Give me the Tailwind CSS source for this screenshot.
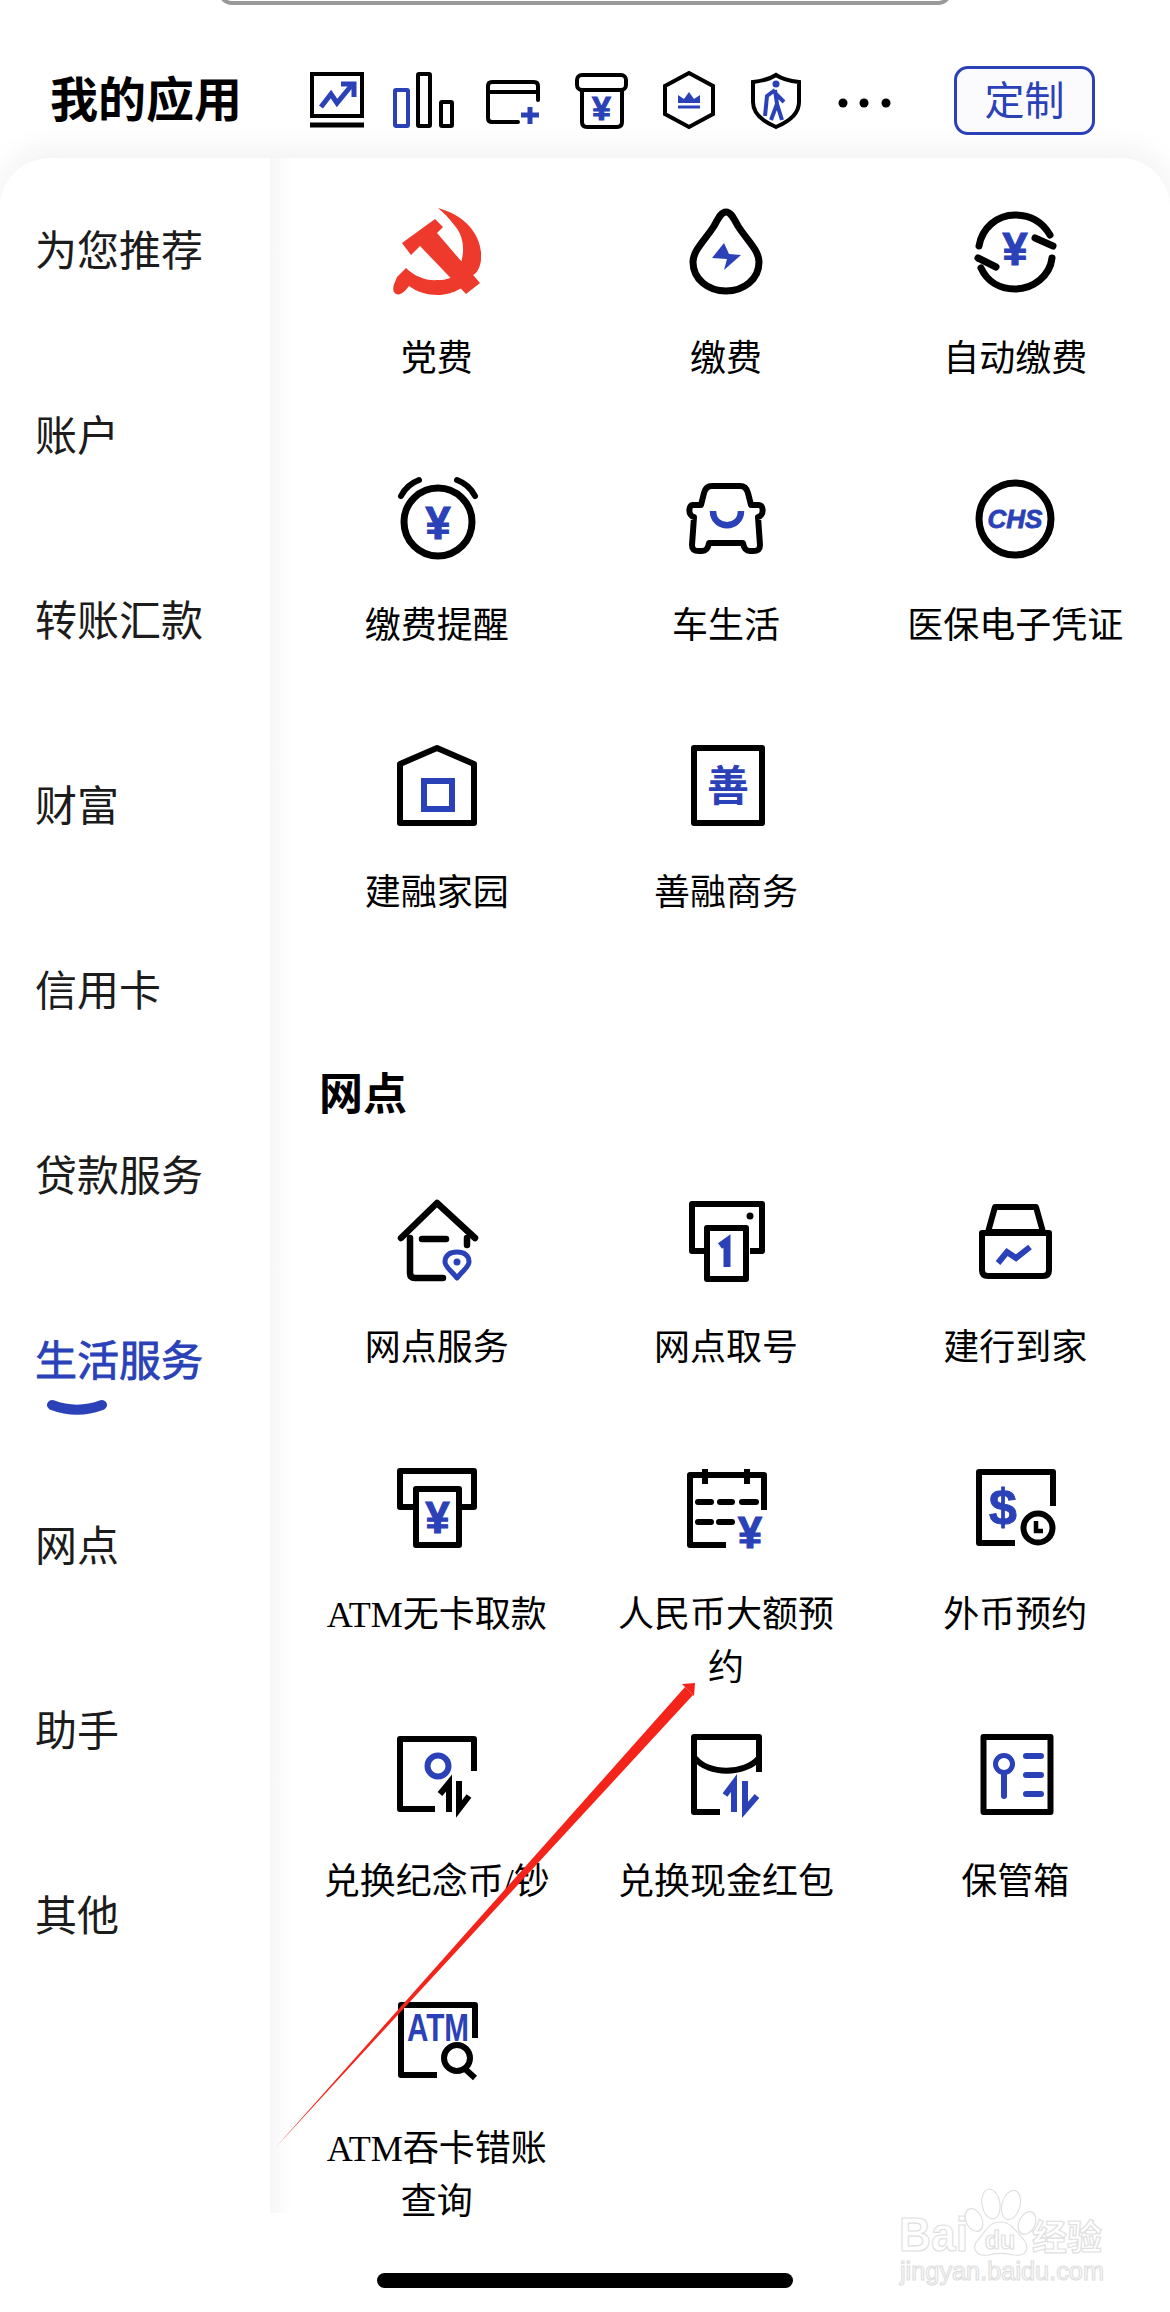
<!DOCTYPE html>
<html lang="zh-CN">
<head>
  <meta charset="UTF-8" />
  <meta name="viewport" content="width=device-width, initial-scale=1" />
  <title>我的应用</title>
  <script src="https://cdn.jsdelivr.net/npm/@tailwindcss/browser@4"></script>
</head>
<body class="bg-white">
<div class="relative w-[1170px] h-[2312px] overflow-hidden bg-white text-black font-['Liberation_Serif','Noto_Sans_CJK_SC',serif]">

  <!-- bottom edge of the search box -->
  <div class="mx-auto -mt-[9px] w-[734px] h-[14px] border-x-[4px] border-b-[4px] border-[#999] rounded-b-[16px]"></div>

  <!-- header -->
  <header class="flex items-center h-[153px] pt-[37px] pl-[50px]">
    <h1 class="w-[194px] pb-[9px] text-[48px] leading-[60px] font-bold font-['Noto_Sans_CJK_SC',sans-serif]">我的应用</h1>
    <div class="flex ml-[48px]">
      <div class="w-[88px] flex justify-center">
        <svg width="60" height="60" viewBox="0 0 60 60" fill="none" class="overflow-visible">
          <rect x="6" y="4" width="50" height="42" stroke="#000" stroke-width="4"/>
          <path d="M4 55H58" stroke="#000" stroke-width="5"/>
          <path d="M15 37L25 24L31 33L45 16" stroke="#2a41b8" stroke-width="5"/>
          <path d="M35 14H48V27" stroke="#2a41b8" stroke-width="5"/>
        </svg>
      </div>
      <div class="w-[88px] flex justify-center">
        <svg width="60" height="60" viewBox="0 0 60 60" fill="none" class="overflow-visible">
          <rect x="1" y="20" width="13" height="36" rx="1" stroke="#2a41b8" stroke-width="4"/>
          <rect x="24" y="4" width="12" height="52" rx="1" stroke="#000" stroke-width="4"/>
          <rect x="47" y="32" width="11" height="24" rx="1" stroke="#000" stroke-width="4"/>
        </svg>
      </div>
      <div class="w-[88px] flex justify-center">
        <svg width="60" height="60" viewBox="0 0 60 60" fill="none" class="overflow-visible">
          <path d="M36 52H10Q6 52 6 48V16Q6 12 10 12H52Q56 12 56 16V30" stroke="#000" stroke-width="4" stroke-linecap="round"/>
          <path d="M6 22H56" stroke="#000" stroke-width="4"/>
          <path d="M48 37V54M39 45H57" stroke="#2a41b8" stroke-width="5"/>
        </svg>
      </div>
      <div class="w-[88px] flex justify-center">
        <svg width="60" height="60" viewBox="0 0 60 60" fill="none" class="overflow-visible">
          <rect x="7" y="5" width="49" height="15" rx="5" stroke="#000" stroke-width="4"/>
          <path d="M12 20V52Q12 57 17 57H47Q52 57 52 52V20" stroke="#000" stroke-width="4"/>
          <text x="31.500" y="50" text-anchor="middle" font-family="Liberation Sans" font-weight="700" font-size="34" stroke="#2a41b8" stroke-width="1" fill="#2a41b8">¥</text>
        </svg>
      </div>
      <div class="w-[88px] flex justify-center">
        <svg width="60" height="60" viewBox="0 0 60 60" fill="none" class="overflow-visible">
          <path d="M31 3L55 16V44L31 57L7 44V16Z" stroke="#000" stroke-width="4"/>
          <path d="M20 25L26 29L31 22L36 29L42 25V33H20Z" fill="#2a41b8"/>
          <path d="M20 37H42" stroke="#2a41b8" stroke-width="3"/>
        </svg>
      </div>
      <div class="w-[88px] flex justify-center">
        <svg width="60" height="60" viewBox="0 0 60 60" fill="none" class="overflow-visible">
          <path d="M30 5C36 9 44 11 53 12V32C53 44 42 52 30 57C18 52 7 44 7 32V12C16 11 24 9 30 5Z" stroke="#000" stroke-width="4"/>
          <circle cx="30" cy="14" r="3.500" fill="#2a41b8"/>
          <path d="M29 20L21 26L19 46M29 20L31 34L25 50M31 34L36 50M30 24L38 32" stroke="#2a41b8" stroke-width="4"/>
        </svg>
      </div>
      <div class="w-[88px] flex justify-center">
        <svg width="60" height="60" viewBox="0 0 60 60" fill="#000">
          <circle cx="9" cy="33" r="4.500"/><circle cx="30" cy="33" r="4.500"/><circle cx="52" cy="33" r="4.500"/>
        </svg>
      </div>
    </div>
    <button class="ml-[46px] w-[141px] h-[69px] rounded-[14px] border-[3px] border-[#2a41b8] bg-[#fbfbfd] text-[#2a41b8] text-[40px] leading-[56px] pb-[4px] font-['Noto_Sans_CJK_SC',sans-serif] font-normal">定制</button>
  </header>

  <!-- card -->
  <div class="relative flex h-[2154px] bg-white rounded-t-[50px] shadow-[0_-10px_30px_rgba(30,30,70,0.06)]">

    <nav class="w-[270px] shrink-0 text-[42px] text-[#1c1c1c] font-['Noto_Sans_CJK_SC',sans-serif]">
      <div class="h-[185px] flex items-center pl-[35px] pb-[7px]">为您推荐</div>
      <div class="h-[185px] flex items-center pl-[35px] pb-[7px]">账户</div>
      <div class="h-[185px] flex items-center pl-[35px] pb-[7px]">转账汇款</div>
      <div class="h-[185px] flex items-center pl-[35px] pb-[7px]">财富</div>
      <div class="h-[185px] flex items-center pl-[35px] pb-[7px]">信用卡</div>
      <div class="h-[185px] flex items-center pl-[35px] pb-[7px]">贷款服务</div>
      <div class="relative h-[185px] flex items-center pl-[35px] pb-[7px] text-[#2a41b8] [-webkit-text-stroke:0.8px_#2a41b8]">
        生活服务
        <svg class="absolute left-[46px] top-[131px]" width="64" height="20" viewBox="0 0 64 20" fill="none">
          <path d="M6 6C22 12 40 12 56 6" stroke="#2a41b8" stroke-width="10" stroke-linecap="round"/>
        </svg>
      </div>
      <div class="h-[185px] flex items-center pl-[35px] pb-[7px]">网点</div>
      <div class="h-[185px] flex items-center pl-[35px] pb-[7px]">助手</div>
      <div class="h-[185px] flex items-center pl-[35px] pb-[7px]">其他</div>
    </nav>

    <div class="w-[22px] h-[2055px] shrink-0 bg-gradient-to-r from-[#f7f7f9] to-white"></div>

    <main class="w-[868px] pt-[50px]">
      <div class="grid grid-cols-3 auto-rows-[267px] text-center text-[36px] leading-[53px]">

        <div class="flex flex-col items-center px-[25px]">
          <svg width="88" height="88" viewBox="0 0 88 88" fill="#ee3a2c">
            <path d="M45 0C75 8 90 30 88 52C87 60 84 66 78 68C76 78 60 87 45 87C34 87 24 84 16 78C13 82 8 88 3 86C-1 84 0 78 2 74L4 69L13 60C22 69 34 73 45 72C55 72 62 70 66 60C72 46 72 30 62 18C56 10 50 4 45 0Z"/>
            <path d="M42 11L50 19L44 25L87 75L73 86L27 38L18 47L9 35Z"/>
          </svg>
          <div class="mt-[37px]">党费</div>
        </div>
        <div class="flex flex-col items-center px-[25px]">
          <svg width="88" height="88" viewBox="0 0 88 88" fill="none">
            <path d="M44 4C49 4 52 11 56 18C64 31 77 42 77 54C77 71 62 83 44 83C26 83 11 71 11 54C11 42 24 31 32 18C36 11 39 4 44 4Z" stroke="#000" stroke-width="7"/>
            <path d="M42 35L30 50L45 51L42 62L59 47L47 46Z" fill="#2a41b8"/>
          </svg>
          <div class="mt-[37px]">缴费</div>
        </div>
        <div class="flex flex-col items-center px-[25px]">
          <svg width="88" height="88" viewBox="0 0 88 88" fill="none">
            <path d="M8 38C11 20 26 7 44 7C60 7 72 15 79 27" stroke="#000" stroke-width="7" stroke-linecap="round"/>
            <path d="M64 30L82 38" stroke="#000" stroke-width="7" stroke-linecap="round"/>
            <path d="M81 50C79 68 62 81 44 81C28 81 16 73 10 60" stroke="#000" stroke-width="7" stroke-linecap="round"/>
            <path d="M25 59L7 50" stroke="#000" stroke-width="7" stroke-linecap="round"/>
            <text x="44" y="57" text-anchor="middle" font-family="Liberation Sans" font-weight="700" font-size="46" textLength="25" lengthAdjust="spacingAndGlyphs" stroke="#2a41b8" stroke-width="1.200" fill="#2a41b8">¥</text>
          </svg>
          <div class="mt-[37px]">自动缴费</div>
        </div>

        <div class="flex flex-col items-center px-[25px]">
          <svg width="88" height="88" viewBox="0 0 88 88" fill="none">
            <circle cx="45" cy="47" r="34" stroke="#000" stroke-width="7"/>
            <path d="M8 21C12 13 18 8 26 5M82 21C78 13 72 8 64 5" stroke="#000" stroke-width="6" stroke-linecap="round"/>
            <text x="45" y="64" text-anchor="middle" font-family="Liberation Sans" font-weight="700" font-size="46" textLength="25" lengthAdjust="spacingAndGlyphs" stroke="#2a41b8" stroke-width="1.200" fill="#2a41b8">¥</text>
          </svg>
          <div class="mt-[37px]">缴费提醒</div>
        </div>
        <div class="flex flex-col items-center px-[25px]">
          <svg width="88" height="88" viewBox="0 0 88 88" fill="none">
            <path d="M30 11H58C63 11 65 14 66 18L69 30H77C82 30 82 41 76 42L78 70C78 75 75 76 71 76H68C64 76 62 74 61 68H27C26 74 24 76 20 76H17C13 76 10 75 10 70L12 42C6 41 6 30 11 30H19L22 18C23 14 25 11 30 11Z" stroke="#000" stroke-width="6" stroke-linejoin="round"/>
            <path d="M31 36C31 55 59 55 59 36" stroke="#2a41b8" stroke-width="6.500"/>
          </svg>
          <div class="mt-[37px]">车生活</div>
        </div>
        <div class="flex flex-col items-center px-[25px]">
          <svg width="88" height="88" viewBox="0 0 88 88" fill="none">
            <circle cx="44" cy="44" r="36" stroke="#000" stroke-width="7"/>
            <text x="44" y="53" text-anchor="middle" font-family="Liberation Sans" font-weight="700" font-style="italic" font-size="25" textLength="55" lengthAdjust="spacingAndGlyphs" stroke="#2a41b8" stroke-width="0.800" fill="#2a41b8">CHS</text>
          </svg>
          <div class="mt-[37px] whitespace-nowrap">医保电子凭证</div>
        </div>

        <div class="flex flex-col items-center px-[25px]">
          <svg width="88" height="88" viewBox="0 0 88 88" fill="none">
            <path d="M44 6L81 22V81H7V22Z" stroke="#000" stroke-width="6" stroke-linejoin="round"/>
            <rect x="31" y="39" width="28" height="28" stroke="#2a41b8" stroke-width="6"/>
          </svg>
          <div class="mt-[37px]">建融家园</div>
        </div>
        <div class="flex flex-col items-center px-[25px]">
          <svg width="88" height="88" viewBox="0 0 88 88" fill="none">
            <rect x="12" y="6" width="68" height="75" stroke="#000" stroke-width="6" stroke-linejoin="round"/>
            <text x="46" y="59" text-anchor="middle" font-family="Noto Sans CJK SC" font-weight="700" font-size="42" fill="#2a41b8">善</text>
          </svg>
          <div class="mt-[37px]">善融商务</div>
        </div>
      </div>

      <h2 class="mt-[54px] mb-[78px] pl-[27px] text-[44px] leading-[56px] font-bold font-['Noto_Sans_CJK_SC',sans-serif]">网点</h2>

      <div class="grid grid-cols-3 auto-rows-[267px] text-center text-[36px] leading-[53px]">
        <div class="flex flex-col items-center px-[25px]">
          <svg width="88" height="88" viewBox="0 0 88 88" fill="none">
            <path d="M8 41L44 6L82 41" stroke="#000" stroke-width="6.500" stroke-linejoin="round" stroke-linecap="round"/>
            <path d="M17 41V76Q17 81 22 81H50M74 41V48" stroke="#000" stroke-width="6.500" stroke-linecap="round"/>
            <path d="M29 42H53" stroke="#000" stroke-width="6.500" stroke-linecap="round"/>
            <path d="M64 81C58 73 52 70 52 65C52 58 57 55 64 55C71 55 76 58 76 65C76 70 70 73 64 81Z" fill="#fff" stroke="#2a41b8" stroke-width="5" stroke-linejoin="round"/>
            <circle cx="64" cy="65" r="3.500" fill="#2a41b8"/>
          </svg>
          <div class="mt-[37px]">网点服务</div>
        </div>
        <div class="flex flex-col items-center px-[25px]">
          <svg width="88" height="88" viewBox="0 0 88 88" fill="none">
            <path d="M22 54H10V7H80V54H68" stroke="#000" stroke-width="6" stroke-linejoin="round"/>
            <circle cx="68" cy="19" r="3.500" fill="#000"/>
            <rect x="25" y="31" width="39" height="51" stroke="#000" stroke-width="6" stroke-linejoin="round"/>
            <path d="M38 49L45 44V70" stroke="#2a41b8" stroke-width="7"/>
          </svg>
          <div class="mt-[37px]">网点取号</div>
        </div>
        <div class="flex flex-col items-center px-[25px]">
          <svg width="88" height="88" viewBox="0 0 88 88" fill="none">
            <path d="M24 10H65L72 35H17Z" stroke="#000" stroke-width="6" stroke-linejoin="round"/>
            <path d="M11 36H78V73Q78 79 72 79H17Q11 79 11 73Z" stroke="#000" stroke-width="6" stroke-linejoin="round"/>
            <path d="M27 66L36 55L45 61L59 50" stroke="#2a41b8" stroke-width="6"/>
          </svg>
          <div class="mt-[37px]">建行到家</div>
        </div>

        <div class="flex flex-col items-center px-[25px]">
          <svg width="88" height="88" viewBox="0 0 88 88" fill="none">
            <path d="M20 43H7V7H81V43H68" stroke="#000" stroke-width="6" stroke-linejoin="round"/>
            <rect x="23" y="25" width="43" height="56" stroke="#000" stroke-width="6" stroke-linejoin="round"/>
            <text x="44.500" y="69" text-anchor="middle" font-family="Liberation Sans" font-weight="700" font-size="44" textLength="24" lengthAdjust="spacingAndGlyphs" stroke="#2a41b8" stroke-width="1.200" fill="#2a41b8">¥</text>
          </svg>
          <div class="mt-[37px]">ATM无卡取款</div>
        </div>
        <div class="flex flex-col items-center px-[25px]">
          <svg width="88" height="88" viewBox="0 0 88 88" fill="none">
            <path d="M44 81H8V11H82V46" stroke="#000" stroke-width="6" stroke-linejoin="round"/>
            <path d="M23 5V20M65 5V20" stroke="#000" stroke-width="6"/>
            <path d="M16 38H29M38 38H50M60 38H74M16 58H29M37 58H50" stroke="#000" stroke-width="6" stroke-linecap="round"/>
            <text x="68" y="84" text-anchor="middle" font-family="Liberation Sans" font-weight="700" font-size="44" textLength="24" lengthAdjust="spacingAndGlyphs" stroke="#2a41b8" stroke-width="1.200" fill="#2a41b8">¥</text>
          </svg>
          <div class="mt-[37px]">人民币大额预约</div>
        </div>
        <div class="flex flex-col items-center px-[25px]">
          <svg width="88" height="88" viewBox="0 0 88 88" fill="none">
            <path d="M44 79H8V8H82V42" stroke="#000" stroke-width="6" stroke-linejoin="round"/>
            <text x="32" y="60" text-anchor="middle" font-family="Liberation Sans" font-weight="700" font-size="50" stroke="#2a41b8" stroke-width="1" fill="#2a41b8">$</text>
            <circle cx="67" cy="64" r="14.500" fill="#fff" stroke="#000" stroke-width="6"/>
            <path d="M65 57V67H72" stroke="#000" stroke-width="4.500"/>
          </svg>
          <div class="mt-[37px]">外币预约</div>
        </div>

        <div class="flex flex-col items-center px-[25px]">
          <svg width="88" height="88" viewBox="0 0 88 88" fill="none">
            <path d="M42 78H7V8H81V40" stroke="#000" stroke-width="6" stroke-linejoin="round"/>
            <circle cx="45" cy="35" r="10.500" stroke="#2a41b8" stroke-width="6"/>
            <path d="M56 81V52L47 63M66 50V78L76 65" stroke="#000" stroke-width="6"/>
          </svg>
          <div class="mt-[37px]">兑换纪念币/钞</div>
        </div>
        <div class="flex flex-col items-center px-[25px]">
          <svg width="88" height="88" viewBox="0 0 88 88" fill="none">
            <path d="M38 81H12V6H77V41" stroke="#000" stroke-width="6" stroke-linejoin="round"/>
            <path d="M13 27C26 44 63 44 77 27" stroke="#000" stroke-width="6"/>
            <path d="M52 81V52L43 64M63 50V79L75 65" stroke="#2a41b8" stroke-width="6"/>
          </svg>
          <div class="mt-[37px]">兑换现金红包</div>
        </div>
        <div class="flex flex-col items-center px-[25px]">
          <svg width="88" height="88" viewBox="0 0 88 88" fill="none">
            <rect x="12.500" y="6" width="67" height="75" stroke="#000" stroke-width="6" stroke-linejoin="round"/>
            <circle cx="33" cy="33" r="8.500" stroke="#2a41b8" stroke-width="5"/>
            <path d="M33 42V65M55 25H70M55 44H70M55 63H70" stroke="#2a41b8" stroke-width="6" stroke-linecap="round"/>
          </svg>
          <div class="mt-[37px]">保管箱</div>
        </div>

        <div class="flex flex-col items-center px-[25px]">
          <svg width="88" height="88" viewBox="0 0 88 88" fill="none">
            <path d="M44 77H8V7H82V40" stroke="#000" stroke-width="6" stroke-linejoin="round"/>
            <text x="45" y="43" text-anchor="middle" font-family="Liberation Sans" font-weight="700" font-size="38" textLength="62" lengthAdjust="spacingAndGlyphs" fill="#2a41b8">ATM</text>
            <circle cx="64" cy="60" r="13" stroke="#000" stroke-width="6"/>
            <path d="M71 70L82 80" stroke="#000" stroke-width="6"/>
          </svg>
          <div class="mt-[37px]">ATM吞卡错账查询</div>
        </div>
      </div>
    </main>
  </div>

  <!-- annotation arrow drawn over the screenshot -->
  <svg class="absolute left-0 top-0 pointer-events-none" width="1170" height="2312" viewBox="0 0 1170 2312">
    <path d="M276 2147L685 1687L693 1695Z" fill="#f5241a"/>
    <path d="M695 1683L682 1684L694 1696Z" fill="#f5241a"/>
  </svg>

  <!-- home bar -->
  <div class="absolute left-[377px] top-[2273px] w-[416px] h-[15px] rounded-full bg-black"></div>

  <!-- watermark -->
  <svg class="absolute left-[890px] top-[2180px]" width="230" height="115" viewBox="0 0 230 115" fill="#fff" stroke="#e0e0e0" stroke-width="1.200">
    <text x="9" y="71" font-family="Liberation Sans" font-weight="700" font-size="49" textLength="69" lengthAdjust="spacingAndGlyphs">Bai</text>
    <ellipse cx="101" cy="24" rx="9" ry="15" transform="rotate(-10 101 24)"/>
    <ellipse cx="121" cy="25" rx="9" ry="15" transform="rotate(15 121 25)"/>
    <ellipse cx="84" cy="40" rx="8" ry="12" transform="rotate(-25 84 40)"/>
    <ellipse cx="137" cy="43" rx="8" ry="12" transform="rotate(25 137 43)"/>
    <path d="M110 42C122 42 128 54 134 60C140 68 136 77 124 75C116 73 106 73 98 75C84 77 82 66 88 60C94 54 98 42 110 42Z"/>
    <text x="110" y="69" text-anchor="middle" font-family="Liberation Sans" font-weight="700" font-size="25">du</text>
    <text x="142" y="70" font-family="Noto Sans CJK SC" font-weight="700" font-size="35">经验</text>
    <text x="10" y="100" font-family="Liberation Sans" font-size="26" textLength="204" lengthAdjust="spacingAndGlyphs">jingyan.baidu.com</text>
  </svg>
</div>
</body>
</html>
